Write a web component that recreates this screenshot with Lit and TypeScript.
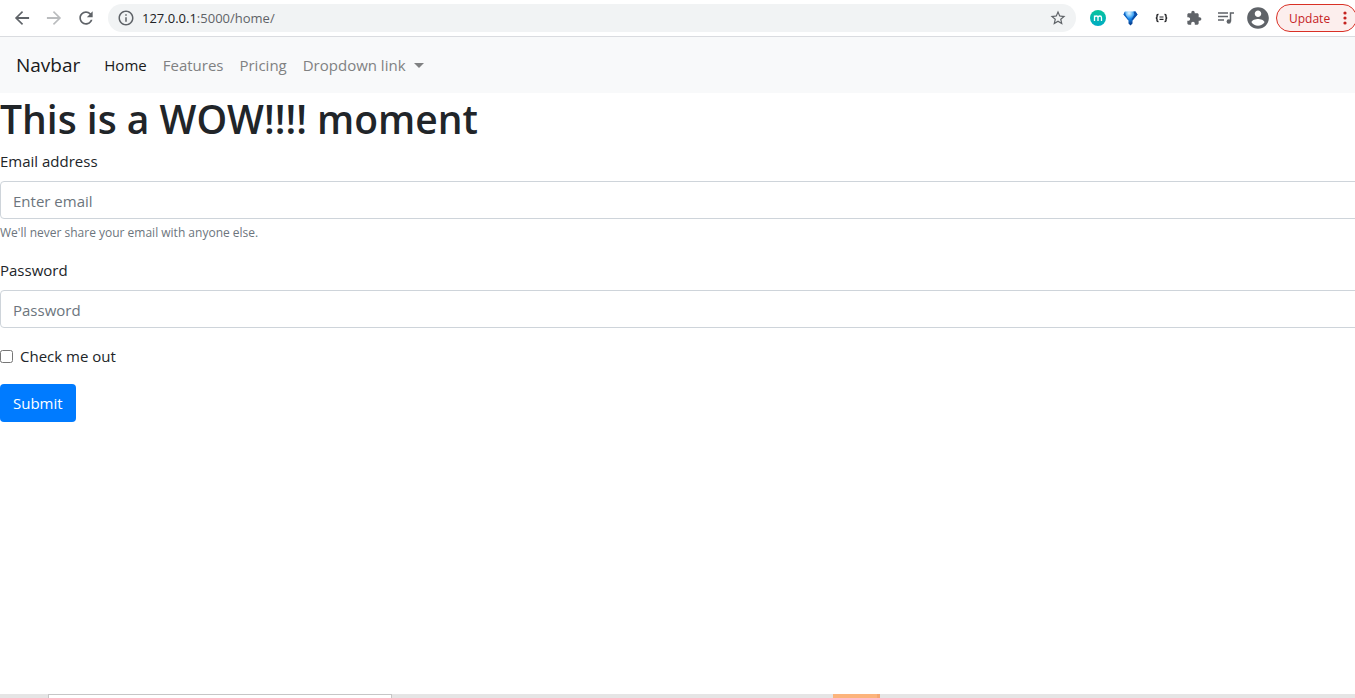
import { LitElement, html, css, svg } from "lit";
import { customElement } from "lit/decorators.js";

const icon = (d: string, size = 20) => html`
  <svg width=${size} height=${size} viewBox="0 0 24 24" fill="currentColor" aria-hidden="true">
    ${svg`<path d=${d}></path>`}
  </svg>`;

const BACK = "M20.500 10.800H7.500l5.800-5.800L12 3.500 3.500 12l8.500 8.500 1.300-1.500L7.500 13.200H20.500z";
const FORWARD = "M3.500 10.800H16.500L10.700 5 12 3.500 20.500 12 12 20.500 10.700 19l5.800-5.800H3.500z";
const RELOAD =
  "M17.65 6.35C16.2 4.9 14.21 4 12 4c-4.42 0-7.99 3.58-7.99 8s3.57 8 7.99 8c3.73 0 6.84-2.55 7.73-6h-2.08c-.82 2.33-3.04 4-5.65 4-3.31 0-6-2.69-6-6s2.69-6 6-6c1.66 0 3.14.69 4.22 1.78L13 11h7V4l-2.35 2.35z";
const INFO =
  "M11 17h2v-6h-2v6zm1-15C6.48 2 2 6.48 2 12s4.48 10 10 10 10-4.48 10-10S17.52 2 12 2zm0 18c-4.41 0-8-3.59-8-8s3.59-8 8-8 8 3.59 8 8-3.59 8-8 8zM11 9h2V7h-2v2z";
const STAR =
  "M22 9.24l-7.19-.62L12 2 9.19 8.63 2 9.24l5.46 4.73L5.82 21 12 17.27 18.18 21l-1.63-7.03L22 9.24zM12 15.4l-3.76 2.27 1-4.28-3.32-2.88 4.38-.38L12 6.1l1.71 4.04 4.38.38-3.32 2.88 1 4.28L12 15.4z";
const PUZZLE =
  "M20.5 11H19V7c0-1.1-.9-2-2-2h-4V3.5C13 2.12 11.88 1 10.5 1S8 2.12 8 3.500V5H4c-1.100 0-1.990.9-1.990 2v3.800H3.500c1.490 0 2.700 1.210 2.700 2.700s-1.210 2.700-2.700 2.700H2V20c0 1.100.9 2 2 2h3.800v-1.500c0-1.490 1.210-2.700 2.700-2.700 1.490 0 2.700 1.210 2.700 2.700V22H17c1.100 0 2-.9 2-2v-4h1.500c1.380 0 2.500-1.120 2.500-2.500S21.880 11 20.500 11z";
const PERSON =
  "M12 2C6.480 2 2 6.480 2 12s4.480 10 10 10 10-4.480 10-10S17.520 2 12 2zm0 3c1.660 0 3 1.340 3 3s-1.340 3-3 3-3-1.340-3-3 1.340-3 3-3zm0 14.200c-2.500 0-4.710-1.280-6-3.220.03-1.990 4-3.080 6-3.080 1.990 0 5.970 1.090 6 3.080-1.290 1.940-3.500 3.220-6 3.220z";

@customElement("browser-bar")
export class BrowserBar extends LitElement {
  static styles = css`
    :host {
      display: block;
      border-bottom: 1px solid #dadce0;
      background: #fff;
      color: #5f6368;
    }
    .bar {
      display: flex;
      align-items: center;
      height: 36px;
      padding-left: 6px;
    }
    button {
      display: flex;
      align-items: center;
      justify-content: center;
      flex: none;
      width: 32px;
      height: 32px;
      padding: 0;
      border: 0;
      background: none;
      color: inherit;
      font: inherit;
    }
    button:disabled {
      color: #babcbe;
    }
    svg {
      display: block;
      flex: none;
    }
    .address {
      display: flex;
      align-items: center;
      flex: 1;
      min-width: 0;
      height: 28px;
      margin: 0 6px;
      padding-left: 9px;
      border-radius: 14px;
      background: #f1f3f4;
    }
    .url {
      flex: 1;
      padding-left: 7px;
      font-size: 13px;
      line-height: 20px;
    }
    .host {
      color: #202124;
    }
    .star {
      margin-right: 2px;
    }
    .update {
      justify-content: space-between;
      width: 81px;
      height: 28px;
      margin: 0 -2px 0 2px;
      padding: 0 9px 0 12px;
      border: 1px solid #d93025;
      border-radius: 14px;
      background: #fceeed;
      color: #c5221f;
      font-size: 12px;
    }
  `;

  render() {
    return html`
      <div class="bar">
        <button aria-label="Back">${icon(BACK)}</button>
        <button aria-label="Forward" disabled>${icon(FORWARD)}</button>
        <button aria-label="Reload">${icon(RELOAD)}</button>
        <div class="address">
          ${icon(INFO, 18)}
          <span class="url"><span class="host">127.0.0.1</span>:5000/home/</span>
          <button class="star" aria-label="Bookmark this page">${icon(STAR, 18)}</button>
        </div>
        <button aria-label="Extension m">
          <svg width="16" height="16" viewBox="0 0 16 16">
            <defs>
              <linearGradient id="teal" x1="0" y1="0" x2="0" y2="1">
                <stop offset="0" stop-color="#08c49c"></stop>
                <stop offset="1" stop-color="#00abc4"></stop>
              </linearGradient>
            </defs>
            <circle cx="8" cy="8" r="8" fill="url(#teal)"></circle>
            <path d="M4.500 11V5.500M4.500 7.500Q4.700 6 6.200 6Q8 6 8 7.800V11M8 7.500Q8.300 6 9.800 6Q11.500 6 11.500 7.800V11"
              fill="none" stroke="#fff" stroke-width="1.300"></path>
          </svg>
        </button>
        <button aria-label="Extension diamond">
          <svg width="16" height="16" viewBox="0 0 16 16">
            <defs>
              <radialGradient id="gem" cx="0.4" cy="0.12" r="0.75">
                <stop offset="0" stop-color="#e6f5ff"></stop>
                <stop offset="0.3" stop-color="#6fc0fa"></stop>
                <stop offset="0.55" stop-color="#1685ea"></stop>
                <stop offset="1" stop-color="#0a4596"></stop>
              </radialGradient>
            </defs>
            <path d="M3 1.500H13.500L15.500 4.500L10.500 10.500V13.500L8.500 15.500L6.500 13.500V10.500L1.500 4.500Z" fill="url(#gem)"></path>
            <path d="M11.500 1.500H13.500L15.500 4.500L10.500 10.500L9.500 9.500L12.500 4.500Z" fill="#0c4fa8"></path>
            <path d="M1.500 4.500L3 1.500L3.500 4.500L6.500 9.500V10.500Z" fill="#1262c0"></path>
          </svg>
        </button>
        <button aria-label="Extension braces">
          <svg width="16" height="16" viewBox="0 0 16 16" fill="none" stroke="#202124" stroke-width="1.400">
            <path d="M4.500 4.500H4Q3 4.500 3 5.500V7Q3 8 1.800 8Q3 8 3 9V10.500Q3 11.500 4 11.500H4.500"></path>
            <path d="M10.500 4.500H11Q12 4.500 12 5.500V7Q12 8 13.200 8Q12 8 12 9V10.500Q12 11.500 11 11.500H10.500"></path>
            <path d="M5.500 7H9.500M5.500 9.300H9.500" stroke-width="1.200"></path>
          </svg>
        </button>
        <button aria-label="Extensions">${icon(PUZZLE, 16)}</button>
        <button aria-label="Media controls">
          <svg width="16" height="16" viewBox="0 0 16 16" fill="none" stroke="currentColor" stroke-width="1.500">
            <path d="M0 3H10M0 6.500H10M0 10H6"></path>
            <path d="M12.500 11.500V3H16"></path>
            <circle cx="10.800" cy="11.500" r="2.200" fill="currentColor" stroke="none"></circle>
          </svg>
        </button>
        <button aria-label="Profile">${icon(PERSON, 26)}</button>
        <button class="update">
          Update
          <svg width="4" height="14" viewBox="0 0 4 14" fill="currentColor">
            <circle cx="2" cy="2" r="1.600"></circle>
            <circle cx="2" cy="7" r="1.600"></circle>
            <circle cx="2" cy="12" r="1.600"></circle>
          </svg>
        </button>
      </div>
    `;
  }
}

@customElement("site-navbar")
export class SiteNavbar extends LitElement {
  static styles = css`
    :host {
      display: block;
      background: #f8f9fa;
    }
    nav {
      display: flex;
      align-items: center;
      gap: 16px;
      height: 56px;
      padding: 0 16px;
      font-size: 15px;
      line-height: 24px;
    }
    a {
      color: #808182;
      text-decoration: none;
      white-space: nowrap;
    }
    .brand {
      margin-right: 8px;
      color: #1a1a1a;
      font-size: 19px;
      line-height: 30px;
    }
    .active {
      color: #1a1a1a;
    }
    .dropdown {
      display: flex;
      align-items: center;
      gap: 8px;
    }
    .caret {
      border-top: 5px solid;
      border-right: 5px solid transparent;
      border-left: 5px solid transparent;
    }
  `;

  render() {
    return html`
      <nav>
        <a class="brand" href="#">Navbar</a>
        <a class="active" href="#" aria-current="page">Home</a>
        <a href="#">Features</a>
        <a href="#">Pricing</a>
        <a class="dropdown" href="#">Dropdown link <span class="caret"></span></a>
      </nav>
    `;
  }
}

@customElement("login-form")
export class LoginForm extends LitElement {
  static styles = css`
    :host {
      display: block;
      color: #212529;
      font-size: 15px;
      line-height: 24px;
    }
    form {
      display: flex;
      flex-direction: column;
      align-items: flex-start;
      gap: 16px;
      margin-right: -11px;
    }
    .group {
      width: 100%;
    }
    .label {
      display: block;
      margin-bottom: 8px;
    }
    .control {
      display: block;
      box-sizing: border-box;
      width: 100%;
      height: 38px;
      padding: 7px 12px 5px;
      border: 1px solid #ced4da;
      border-radius: 4px;
      background: #fff;
      color: #495057;
      font: inherit;
    }
    .control::placeholder {
      color: #6c757d;
      opacity: 1;
    }
    .help {
      display: block;
      margin-top: 4px;
      color: #6c757d;
      font-size: 12px;
      line-height: 19px;
    }
    .check {
      display: flex;
      align-items: center;
      gap: 7px;
    }
    .check input {
      width: 13px;
      height: 13px;
      margin: 0;
    }
    .submit {
      height: 38px;
      padding: 6px 13px;
      border: 0;
      border-radius: 4px;
      background: #007bff;
      color: #fff;
      font: inherit;
    }
  `;

  render() {
    return html`
      <form @submit=${(e: Event) => e.preventDefault()}>
        <div class="group">
          <label class="label" for="email">Email address</label>
          <input class="control" id="email" type="email" placeholder="Enter email" aria-describedby="help" />
          <small class="help" id="help">We'll never share your email with anyone else.</small>
        </div>
        <div class="group">
          <label class="label" for="password">Password</label>
          <input class="control" id="password" type="password" placeholder="Password" />
        </div>
        <div class="check">
          <input id="check" type="checkbox" />
          <label for="check">Check me out</label>
        </div>
        <button class="submit" type="submit">Submit</button>
      </form>
    `;
  }
}

@customElement("app-root")
export class AppRoot extends LitElement {
  static styles = css`
    :host {
      display: flex;
      flex-direction: column;
      height: 100vh;
      overflow: hidden;
      background: #fff;
      font-family: "Open Sans", "Noto Sans", sans-serif;
    }
    main {
      flex: 1;
    }
    h1 {
      margin: 0 0 4px;
      color: #212529;
      font-size: 39px;
      font-weight: 600;
      line-height: 52px;
    }
    .taskbar {
      display: grid;
      grid-template-columns: 48fr 344fr 441fr 47fr 475fr;
      height: 4px;
      background: #e5e5e5;
    }
    .search {
      grid-column: 2;
      box-sizing: border-box;
      border: 1px solid #c6c6c6;
      border-bottom: 0;
      background: #fff;
    }
    .alert {
      grid-column: 4;
      box-sizing: border-box;
      border-right: 3px solid #f4a873;
      background: #fcb47c;
    }
  `;

  render() {
    return html`
      <browser-bar></browser-bar>
      <site-navbar></site-navbar>
      <main>
        <h1>This is a WOW!!!! moment</h1>
        <login-form></login-form>
      </main>
      <div class="taskbar">
        <div class="search"></div>
        <div class="alert"></div>
      </div>
    `;
  }
}
